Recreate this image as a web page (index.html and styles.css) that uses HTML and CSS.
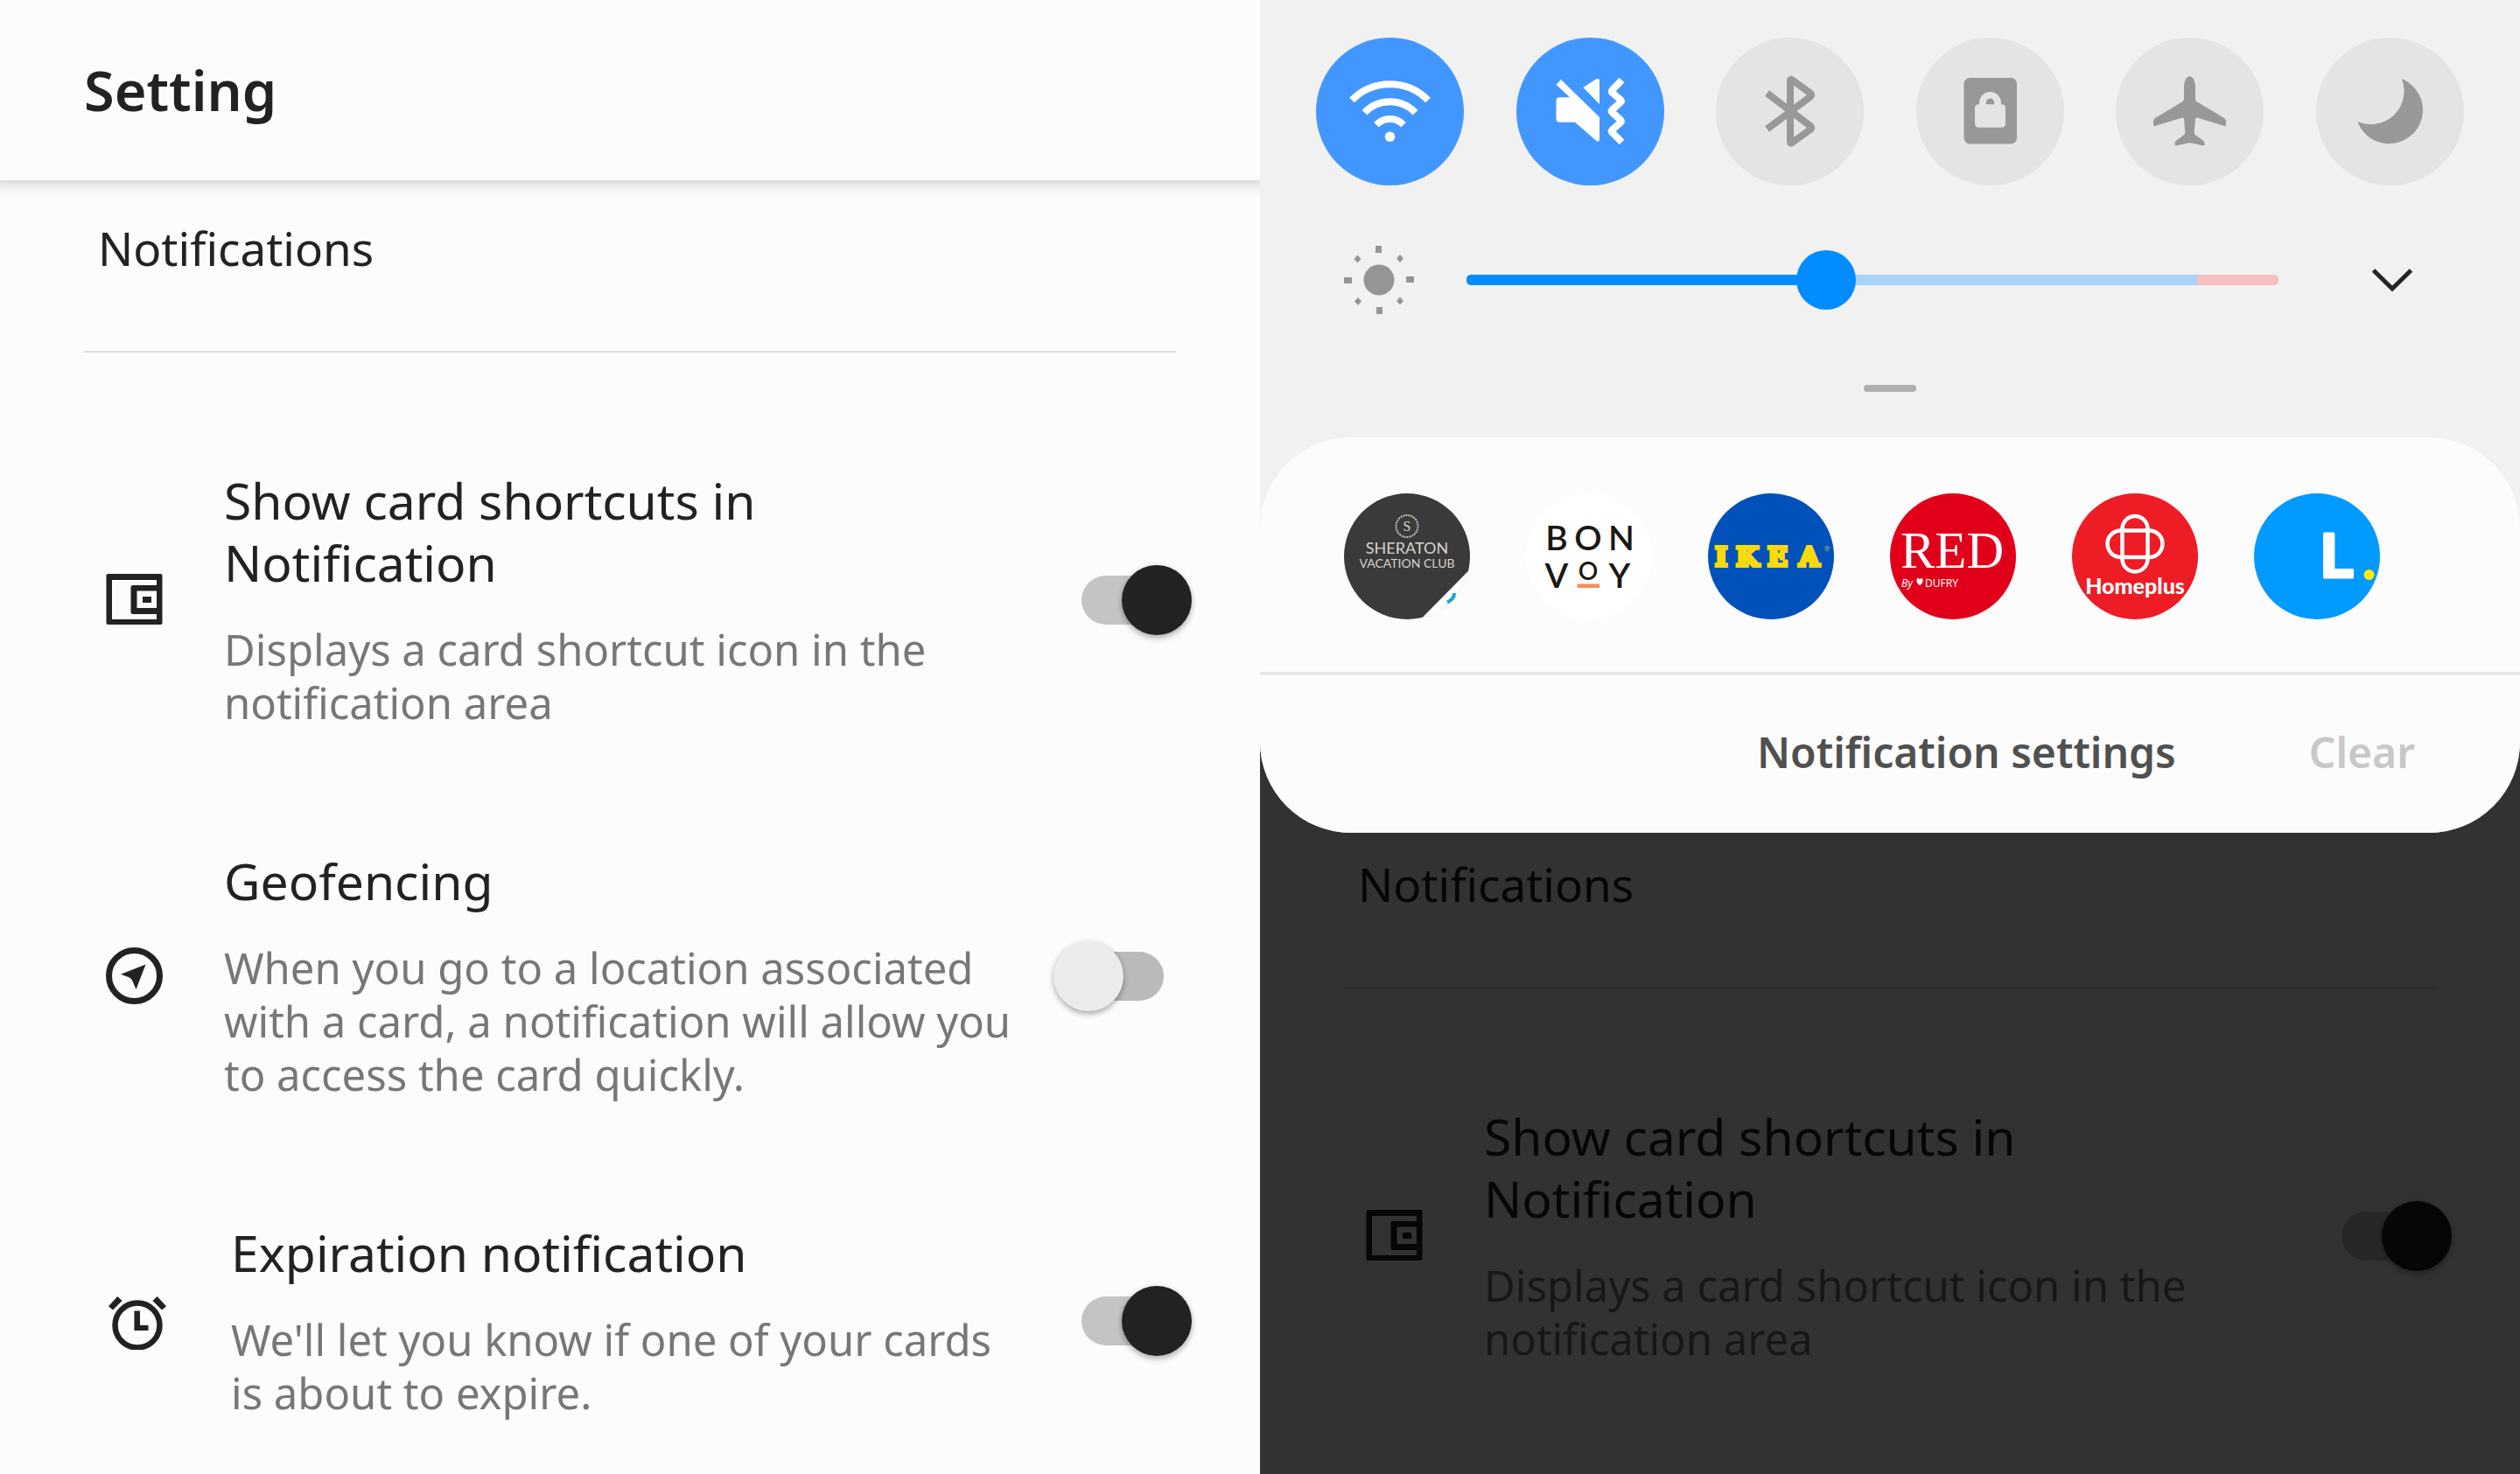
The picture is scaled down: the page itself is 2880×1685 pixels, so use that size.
FILE: index.html
```html
<!DOCTYPE html>
<html lang="en">
<head>
<meta charset="utf-8">
<meta name="viewport" content="width=device-width, initial-scale=1">
<title>Setting</title>
<link rel="stylesheet" href="styles.css">
</head>
<body>
<main class="screens">
  <section class="screen">
    <header class="app-bar"><h1 class="app-title">Setting</h1></header>
    <div class="settings">
      <h2 class="section-title">Notifications</h2>
      <hr class="rule">
      <ul class="items">
        <li class="item">
          <svg class="item-icon" width="65" height="59" viewBox="0 0 65 59" aria-hidden="true"><path fill="currentColor" fill-rule="evenodd" d="M2.500 0h60a2 2 0 0 1 2 2v54a2 2 0 0 1-2 2h-60a2 2 0 0 1-2-2V2a2 2 0 0 1 2-2zM7 7v45h51v-6H31a2.500 2.500 0 0 1-2.500-2.500V15.500A2.500 2.500 0 0 1 31 13h27V7zM35.500 19.500V39H58V19.500zM42 26h10v7H42z"/></svg>
          <div class="item-text">
            <label class="item-title" for="shortcuts">Show card shortcuts in<br>Notification</label>
            <p class="item-desc">Displays a card shortcut icon in the<br>notification area</p>
          </div>
          <input class="switch" type="checkbox" id="shortcuts" checked>
        </li>
        <li class="item">
          <svg class="item-icon" width="65" height="65" viewBox="0 0 65 65" aria-hidden="true"><circle cx="32.500" cy="32.500" r="29" fill="none" stroke="currentColor" stroke-width="7"/><path fill="currentColor" d="M45.500 19.500 34.500 48 30.500 38.500Q29.500 35.500 26.500 34.300L17 30.800z"/></svg>
          <div class="item-text">
            <label class="item-title" for="geofencing">Geofencing</label>
            <p class="item-desc">When you go to a location associated<br>with a card, a notification will allow you<br>to access the card quickly.</p>
          </div>
          <input class="switch" type="checkbox" id="geofencing">
        </li>
        <li class="item">
          <svg class="item-icon" width="73" height="65" viewBox="0 -4 73 65" aria-hidden="true"><circle cx="36" cy="33" r="25.500" fill="none" stroke="currentColor" stroke-width="6.500"/><path fill="currentColor" d="M32.400 16.500H39V33h9.500v6H32.400zM3 11.300 13.300 0l5.300 5L8 15.500zM69 11.300 58.700 0l-5.300 5L64 15.500z"/></svg>
          <div class="item-text">
            <label class="item-title" for="expiration">Expiration notification</label>
            <p class="item-desc">We'll let you know if one of your cards<br>is about to expire.</p>
          </div>
          <input class="switch" type="checkbox" id="expiration" checked>
        </li>
      </ul>
    </div>
  </section>

  <section class="screen screen--dimmed">
    <div class="shade">
      <div class="toggles">
        <button class="toggle toggle--on" type="button" aria-label="Wi-Fi" aria-pressed="true">
          <svg viewBox="0 0 169 169"><g fill="none" stroke="currentColor" stroke-width="8"><path d="M41 71.500a61 61 0 0 1 87 0M55.500 85.700a40 40 0 0 1 58 0M69 99.700a21.500 21.500 0 0 1 31 0"/></g><circle cx="84.500" cy="113.300" r="5.800" fill="currentColor"/></svg>
        </button>
        <button class="toggle toggle--on" type="button" aria-label="Vibrate" aria-pressed="true">
          <svg viewBox="0 0 169 169"><path fill="currentColor" d="M45.500 53.700 51 48 95 91v25.500q-.5 3-3 2L67 96.700H49.500q-4 0-4-4V72.300q0-4 4-4H61zM76.300 57 91 47.500q3.500-1.500 4 1.500v27z"/><path d="M120.500 48.500 109.500 60q-1.500 1.500 0 3l9.500 8q1.500 1.500 0 3l-9.500 8.500q-1.500 1.500 0 3l9.500 8.500q1.500 1.500 0 3l-9.500 8.500q-1.500 1.500 0 3l11 11" fill="none" stroke="currentColor" stroke-width="8" stroke-linejoin="round"/></svg>
        </button>
        <button class="toggle" type="button" aria-label="Bluetooth" aria-pressed="false">
          <svg viewBox="0 0 169 169"><path d="M58.500 63.500 108 101q2.500 2 0 4L86.500 120.500q-1.500.5-1.500-1V49q0-1.500 1.500-1L108 63.500q2.500 2 0 4L58.500 104.500" fill="none" stroke="currentColor" stroke-width="8" stroke-linejoin="round"/></svg>
        </button>
        <button class="toggle" type="button" aria-label="Screen rotation lock" aria-pressed="false">
          <svg viewBox="0 0 169 169"><path fill="currentColor" fill-rule="evenodd" d="M61 46h47.500a6.500 6.500 0 0 1 6.500 6.500v62.500a6.500 6.500 0 0 1-6.500 6.500H61a6.500 6.500 0 0 1-6.500-6.500V52.500A6.500 6.500 0 0 1 61 46zM72 76.300q-5 0-5 4v18q0 4.400 4.500 4.400h26q4.500 0 4.500-4.400v-18q0-4-5-4V74.500a12.500 12.500 0 0 0-25 0zM79.800 76.300v-2a4.700 4.700 0 0 1 9.400 0v2z"/></svg>
        </button>
        <button class="toggle" type="button" aria-label="Airplane mode" aria-pressed="false">
          <svg viewBox="0 0 169 169"><path fill="currentColor" d="M84.500 44.300C88.500 44.300 91 50 91 57v13q0 2 1.800 3.300L124 92q2 1.300 2 3.500v4q0 2-2 1.500L93 91.500q-2-.5-2 1.500l-1.300 15q0 2 1.300 3.300l9 6.500q1.800 1.500 1.500 4 0 2-2 1.500l-15-3-15 3q-2 .5-2-1.500-.3-2.500 1.500-4l9-6.500q1.300-1.300 1.300-3.300L78 93q0-2-2-1.500L45 101q-2 .5-2-1.500v-4q0-2.200 2-3.500l31.200-18.700Q78 72 78 70V57c0-7 2.500-12.700 6.500-12.700z"/></svg>
        </button>
        <button class="toggle" type="button" aria-label="Night mode" aria-pressed="false">
          <svg viewBox="0 0 169 169"><path fill="currentColor" d="M97.800 47A38.500 38.500 0 1 1 47.300 96 38 38 0 0 0 97.800 47z"/></svg>
        </button>
      </div>

      <div class="brightness">
        <svg width="80" height="80" viewBox="0 0 80 80" aria-hidden="true"><path fill="#959595" d="M36 1h7v8h-7zM37 71h7v8h-7zM0 37h9v7H0zM71 36h9v7h-9zM15.500 11.500l4 4.500-4 4.500-4-4.500zM64 11l4 4.500-4 4.500-4-4.500zM16 60l4 4.500-4 4.500-4-4.500zM64 59.500l4 4.500-4 4.500-4-4.500z"/><circle cx="40" cy="40" r="17.500" fill="#959595"/></svg>
        <input class="slider" type="range" min="0" max="1000" value="438" aria-label="Brightness">
        <button class="expand" type="button" aria-label="Expand"><svg width="48" height="28" viewBox="0 0 48 28"><path d="M2.500 3 24 24 45.500 3" fill="none" stroke="#252525" stroke-width="5"/></svg></button>
      </div>
      <div class="handle"></div>

      <div class="card">
        <div class="brands">
          <button class="brand" type="button" aria-label="Sheraton Vacation Club">
            <svg viewBox="0 0 144 144"><circle cx="72" cy="72" r="72" fill="#3a3a3a"/><path d="M142.300 88.500A72 72 0 0 1 89.500 142z" fill="#fff"/><path d="M126 114q0 7-8 10.500" fill="none" stroke="#1ba3d6" stroke-width="4"/><circle cx="72" cy="37.500" r="12.500" fill="none" stroke="#c9c7c2" stroke-width="2" stroke-dasharray="2 1"/><g fill="#d6d3cd" text-anchor="middle"><text class="serif" x="72" y="43" font-size="16">S</text><text class="lato" x="72" y="69" font-size="18">SHERATON</text><text class="lato" x="72" y="85" font-size="14">VACATION CLUB</text></g></svg>
          </button>
          <button class="brand" type="button" aria-label="Bonvoy">
            <svg viewBox="0 0 144 144"><circle cx="72" cy="72" r="72" fill="#fff"/><g class="lato" fill="#1c1814" font-weight="600" font-size="39" text-anchor="middle"><text x="35 71 109" y="65">BON</text><text y="108"><tspan x="35">V</tspan><tspan x="71" y="99" font-size="28">O</tspan><tspan x="107" y="108">Y</tspan></text></g><path d="M58.500 103.500h25.500v4.500H58.500z" fill="#f59158"/></svg>
          </button>
          <button class="brand" type="button" aria-label="IKEA">
            <svg viewBox="0 0 144 144"><circle cx="72" cy="72" r="72" fill="#0051ba"/><text class="slab" x="8 32 68 104" y="83" fill="#fada0c" stroke="#fada0c" stroke-width="4" font-weight="700" font-size="30">IKEA</text><text class="inter" x="133" y="67" fill="#a5a88a" font-size="9">®</text></svg>
          </button>
          <button class="brand" type="button" aria-label="RED by Dufry">
            <svg viewBox="0 0 144 144"><circle cx="72" cy="72" r="72" fill="#e1001a"/><g fill="#fff"><text class="serif" x="12" y="85" font-size="59">RED</text><text class="noto" x="13" y="107" font-size="12" font-style="italic">By</text><path d="M34 98q4-3 3.500 2-.5 4-3.500 5-3-1-3.500-5-.5-5 3.500-2z"/><text class="noto" x="40" y="107" font-size="12">DUFRY</text></g></svg>
          </button>
          <button class="brand" type="button" aria-label="Homeplus">
            <svg viewBox="0 0 144 144"><circle cx="72" cy="72" r="72" fill="#ee1c24"/><g fill="none" stroke="#fff" stroke-width="4.500"><rect x="57.500" y="26" width="29" height="63.500" rx="14.500"/><rect x="40.500" y="42.500" width="63" height="30.500" rx="15.200"/></g><text class="lato" x="72" y="115" fill="#fff" font-size="25" font-weight="900" text-anchor="middle">Homeplus</text></svg>
          </button>
          <button class="brand" type="button" aria-label="L.">
            <svg viewBox="0 0 144 144"><circle cx="72" cy="72" r="72" fill="#019aff"/><text class="inter" x="76" y="96" fill="#fff" stroke="#fff" stroke-width="3" stroke-linejoin="round" font-size="69" font-weight="700">L</text><circle cx="131.500" cy="93" r="6" fill="#ffec00"/></svg>
          </button>
        </div>
        <div class="card-actions">
          <button class="action" type="button">Notification settings</button>
          <button class="action" type="button" disabled>Clear</button>
        </div>
      </div>
    </div>

    <div class="settings settings--behind">
      <h2 class="section-title">Notifications</h2>
      <hr class="rule">
      <ul class="items">
        <li class="item">
          <svg class="item-icon" width="65" height="59" viewBox="0 0 65 59" aria-hidden="true"><path fill="currentColor" fill-rule="evenodd" d="M2.500 0h60a2 2 0 0 1 2 2v54a2 2 0 0 1-2 2h-60a2 2 0 0 1-2-2V2a2 2 0 0 1 2-2zM7 7v45h51v-6H31a2.500 2.500 0 0 1-2.500-2.500V15.500A2.500 2.500 0 0 1 31 13h27V7zM35.500 19.500V39H58V19.500zM42 26h10v7H42z"/></svg>
          <div class="item-text">
            <label class="item-title" for="shortcuts-behind">Show card shortcuts in<br>Notification</label>
            <p class="item-desc">Displays a card shortcut icon in the<br>notification area</p>
          </div>
          <input class="switch" type="checkbox" id="shortcuts-behind" checked>
        </li>
      </ul>
    </div>
  </section>
</main>
</body>
</html>
```
FILE: styles.css
```css
* { box-sizing: border-box; }

body {
  margin: 0;
  background: #fcfcfc;
  color: #222;
  font-family: "Noto Sans", "Open Sans", sans-serif;
}

h1, h2, p, ul { margin: 0; padding: 0; }

button {
  border: 0;
  padding: 0;
  background: none;
  font: inherit;
  color: inherit;
}

svg { display: block; }

.screens {
  display: grid;
  grid-template-columns: 1fr 1fr;
  min-height: 100vh;
}

.screen {
  display: flex;
  flex-direction: column;
  min-width: 0;
  background: #fcfcfc;
}

.screen--dimmed { background: #323232; }

/* Settings list */

.app-bar {
  display: flex;
  align-items: center;
  height: 206px;
  padding: 0 96px;
  box-shadow: 0 -8px 16px 12px rgba(0, 0, 0, .18);
  clip-path: inset(0 0 -30px 0);
}

.app-title {
  font-size: 63px;
  font-weight: 600;
  line-height: 84px;
}

.settings {
  flex: 1;
  padding: 41px 0 60px;
}

.section-title {
  padding: 0 112px;
  font-size: 53px;
  font-weight: 400;
  line-height: 74px;
}

.rule {
  height: 2px;
  margin: 80px 96px 134px;
  border: 0;
  background: #ddd;
}

.items {
  display: flex;
  flex-direction: column;
  gap: 138px;
  list-style: none;
}

.item {
  display: flex;
  align-items: center;
  padding: 0 78px 0 121px;
}

.item-icon {
  flex: none;
  margin-right: 70px;
}

.item-text {
  display: flex;
  flex: 1;
  flex-direction: column;
  gap: 33px;
  white-space: nowrap;
}

.item-title {
  font-size: 57px;
  line-height: 71px;
}

.item-desc {
  color: #777;
  font-size: 49px;
  line-height: 61px;
}

.switch {
  position: relative;
  flex: none;
  width: 94px;
  height: 56px;
  margin: 0 32px;
  border-radius: 28px;
  background: #bababa;
  appearance: none;
}

.switch::before {
  content: "";
  position: absolute;
  top: -12px;
  left: -32px;
  width: 80px;
  height: 80px;
  border-radius: 50%;
  background: #ebebeb;
  box-shadow: 0 4px 6px rgba(0, 0, 0, .25), 0 0 6px rgba(0, 0, 0, .1);
}

.switch:checked { background: #c4c4c4; }

.switch:checked::before {
  left: 46px;
  background: #222;
}

/* The list seen through the scrim, under the quick panel */
.settings--behind {
  padding-top: 22px;
  color: #060606;
}

.settings--behind .rule { background: #2c2c2c; }

.settings--behind .item-desc { color: #171717; }

.settings--behind .switch { background: #272727; }

.settings--behind .switch::before { background: #060606; }

/* Quick panel */

.shade {
  padding-top: 43px;
  border-radius: 0 0 104px 104px;
  background: #f1f1f1;
}

.toggles {
  display: flex;
  justify-content: space-between;
  padding: 0 64px;
}

.toggle {
  width: 169px;
  height: 169px;
  border-radius: 50%;
  background: #e4e4e4;
  color: #989898;
}

.toggle--on {
  background: #4297ff;
  color: #fff;
}

.brightness {
  display: flex;
  align-items: center;
  margin-top: 68px;
  padding: 0 122px 0 96px;
}

.slider {
  flex: 1;
  min-width: 0;
  height: 68px;
  margin: 0 106px 0 60px;
  background: none;
  appearance: none;
}

.slider::-webkit-slider-runnable-track {
  height: 12px;
  border-radius: 5px;
  background: linear-gradient(90deg, #018cff 44%, #a8d3f6 44% 90%, #f6c0be 90%);
}

.slider::-webkit-slider-thumb {
  width: 68px;
  height: 68px;
  margin-top: -28px;
  border-radius: 50%;
  background: #018cff;
  appearance: none;
}

.handle {
  width: 60px;
  height: 8px;
  margin: 80px auto 52px;
  border-radius: 4px;
  background: #b0b0b0;
}

.card {
  border-radius: 104px;
  background: #fcfcfc;
}

.brands {
  display: flex;
  gap: 64px;
  padding: 64px 96px 60px;
  border-bottom: 4px solid #e8e8e8;
}

.brand {
  width: 144px;
  height: 144px;
  border-radius: 50%;
}

.lato { font-family: Lato, sans-serif; }
.inter { font-family: Inter, sans-serif; }
.noto { font-family: "Noto Sans", sans-serif; }
.serif { font-family: "Liberation Serif", serif; }
.slab { font-family: "DejaVu Serif", serif; }

.card-actions {
  display: flex;
  justify-content: flex-end;
  gap: 152px;
  padding: 55px 120px 59px;
}

.action {
  color: #505050;
  font-size: 48px;
  font-weight: 600;
  line-height: 66px;
}

.action:disabled { color: #c8c8c8; }
```
